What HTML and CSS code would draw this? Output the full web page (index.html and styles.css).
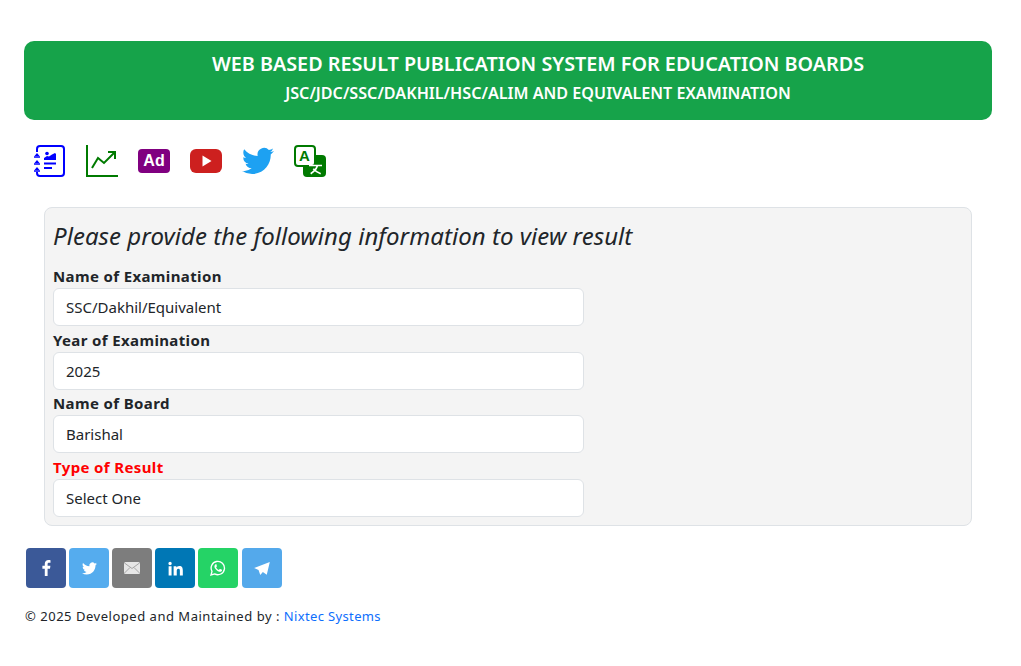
FILE: index.html
```html
<!DOCTYPE html>
<html lang="en">
<head>
    <meta charset="UTF-8">
    <meta name="viewport" content="width=device-width, initial-scale=1.0">
    <title>Web Based Result Publication System</title>
    <link rel="stylesheet" href="styles.css">
</head>
<body>
    <div class="page">
        <div class="banner">
            <h1>WEB BASED RESULT PUBLICATION SYSTEM FOR EDUCATION BOARDS</h1>
            <h2>JSC/JDC/SSC/DAKHIL/HSC/ALIM AND EQUIVALENT EXAMINATION</h2>
        </div>

        <div class="tools">
            <a href="#" class="tool">
                <svg width="32" height="32" viewBox="0 0 32 32">
                    <path d="M3 7V4a3 3 0 0 1 3-3h21a3 3 0 0 1 3 3v24a3 3 0 0 1-3 3H6a3 3 0 0 1-3-3v-1" fill="none" stroke="#00f" stroke-width="2"/>
                    <path d="M0 12h6M0 19h6M0 26h6" stroke="#00f" stroke-width="1.600"/>
                    <path d="M3 8l2.500 3h-5zM3 15l2.500 3h-5zM3 22l2.500 3h-5z" fill="#00f"/>
                    <circle cx="13" cy="8.500" r="1.800" fill="#00f"/>
                    <path d="M10 15v-2l3-2 2 .5 3-2 3-1.500 1 1v6z" fill="#00f"/>
                    <path d="M10 18.500h12M10 23h8" stroke="#00f" stroke-width="1.800"/>
                </svg>
            </a>
            <a href="#" class="tool">
                <svg width="32" height="32" viewBox="0 0 32 32" fill="none" stroke="#007a00" stroke-width="2">
                    <path d="M1 0v31h32"/>
                    <path d="M6 23l6-10 6 5 11-11"/>
                    <path d="M22 7h7v7"/>
                </svg>
            </a>
            <a href="#" class="tool">
                <span class="ad-badge">Ad</span>
            </a>
            <a href="#" class="tool">
                <svg width="32" height="32" viewBox="0 0 32 32">
                    <rect x="0" y="4" width="32" height="24" rx="6" fill="#cd201f"/>
                    <path d="M12.500 10.500l9 5.500-9 5.500z" fill="#fff"/>
                </svg>
            </a>
            <a href="#" class="tool">
                <svg width="32" height="32" viewBox="0 0 24 24">
                    <path fill="#1da1f2" d="M23.950 4.570a10 10 0 0 1-2.820.77 4.960 4.960 0 0 0 2.160-2.720c-.95.550-2 .95-3.130 1.180a4.920 4.920 0 0 0-8.380 4.480C7.690 8.100 4.070 6.130 1.640 3.160a4.820 4.820 0 0 0-.67 2.480c0 1.710.87 3.210 2.190 4.100a4.900 4.900 0 0 1-2.230-.62v.06a4.920 4.920 0 0 0 3.950 4.830 4.940 4.940 0 0 1-2.210.08 4.940 4.940 0 0 0 4.600 3.420A9.870 9.870 0 0 1 0 19.540a14 14 0 0 0 7.560 2.210c9.050 0 14-7.500 14-13.980 0-.21 0-.42-.02-.63a9.940 9.940 0 0 0 2.460-2.550z"/>
                </svg>
            </a>
            <a href="#" class="tool">
                <svg width="32" height="32" viewBox="0 0 32 32">
                    <rect x="9" y="10" width="23" height="22" rx="4" fill="#007a00"/>
                    <rect x="1" y="1" width="20" height="20" rx="3" fill="#fff" stroke="#007a00" stroke-width="2"/>
                    <text x="10.500" y="16" class="tr-a">A</text>
                    <path d="M15 20.500h13M23.300 21c-1 3-3.500 5.700-6.600 7.700M19.300 23.700c2 2.300 4.500 4 7.400 5" fill="none" stroke="#fff" stroke-width="1.700"/>
                </svg>
            </a>
        </div>

        <form class="result-form">
            <h3>Please provide the following information to view result</h3>
            <label for="exam">Name of Examination</label>
            <select id="exam"><option>SSC/Dakhil/Equivalent</option></select>
            <label for="year">Year of Examination</label>
            <select id="year"><option>2025</option></select>
            <label for="board">Name of Board</label>
            <select id="board"><option>Barishal</option></select>
            <label for="type" class="required">Type of Result</label>
            <select id="type"><option>Select One</option></select>
        </form>

        <div class="share">
            <a href="#" class="share-btn fb">
                <svg width="20" height="20" viewBox="0 0 20 20"><path fill="#fff" d="M11.600 18V10.700h2.400l.4-2.900h-2.800V6.100c0-.8.300-1.400 1.400-1.400h1.500V2.200C14.200 2.100 13.400 2 12.500 2 10.300 2 8.800 3.300 8.800 5.800v2H6.400v2.900h2.400V18z"/></svg>
            </a>
            <a href="#" class="share-btn tw">
                <svg width="15" height="15" viewBox="0 0 24 24"><path fill="#fff" d="M23.950 4.570a10 10 0 0 1-2.820.77 4.960 4.960 0 0 0 2.160-2.720c-.95.550-2 .95-3.130 1.180a4.920 4.920 0 0 0-8.380 4.480C7.690 8.100 4.070 6.130 1.640 3.160a4.820 4.820 0 0 0-.67 2.480c0 1.710.87 3.210 2.190 4.100a4.900 4.900 0 0 1-2.230-.62v.06a4.920 4.920 0 0 0 3.950 4.830 4.940 4.940 0 0 1-2.210.08 4.940 4.940 0 0 0 4.600 3.420A9.870 9.870 0 0 1 0 19.540a14 14 0 0 0 7.560 2.210c9.050 0 14-7.500 14-13.980 0-.21 0-.42-.02-.63a9.940 9.940 0 0 0 2.460-2.550z"/></svg>
            </a>
            <a href="#" class="share-btn mail">
                <svg width="16" height="12" viewBox="0 0 16 12"><rect width="16" height="12" rx="1.500" fill="#e6e6e6"/><path d="M0.500 1l7.500 5.500L15.500 1M0.500 11l5.500-5.500M15.500 11L10 5.500" fill="none" stroke="#8a8a8a" stroke-width=".7"/></svg>
            </a>
            <a href="#" class="share-btn li">
                <svg width="15" height="15" viewBox="0 0 24 24"><path fill="#fff" d="M1 8.500h4.700V23H1zM3.300 1.200a2.700 2.700 0 1 1 0 5.400 2.700 2.700 0 0 1 0-5.400zM9 8.500h4.400v2c.7-1.200 2.300-2.400 4.600-2.400 4.800 0 5.700 3.100 5.700 7.200V23H19v-6.800c0-1.600 0-3.700-2.300-3.700s-2.700 1.800-2.700 3.600V23H9z"/></svg>
            </a>
            <a href="#" class="share-btn wa">
                <svg width="16" height="16" viewBox="0 0 24 24"><path fill="none" stroke="#fff" stroke-width="2" d="M1.500 22.500l1.500-5.500a10 10 0 1 1 4 3.900z"/><path fill="#fff" d="M8.800 6.500c-.4 0-.9.200-1.200.6-.5.600-1 1.400-1 2.600 0 2.700 3.700 7.100 7.700 8 1.500.300 3.400-.5 3.700-2 .1-.4.100-.8 0-1l-2.700-1.300c-.3-.1-.5 0-.7.200l-1 1.200c-.2.200-.4.200-.6.100-1.600-.7-2.900-1.900-3.700-3.400-.1-.2 0-.4.100-.5l.7-.9c.2-.2.200-.4.100-.6L10 7c-.2-.4-.5-.5-1.200-.5z"/></svg>
            </a>
            <a href="#" class="share-btn tg">
                <svg width="16" height="13" viewBox="0 0 18 15"><path fill="#fff" d="M18 0L0 7l5 2.300L7 15l3-3.600 4.500 3.300z"/></svg>
            </a>
        </div>

        <p class="footer">© 2025 Developed and Maintained by : <a href="#">Nixtec Systems</a></p>
    </div>
</body>
</html>
```

FILE: styles.css
```css
body {
    margin: 0;
    background-color: #fff;
    font-family: "Noto Sans", "Open Sans", sans-serif;
    color: #212529;
}
a {
    text-decoration: none;
}
.page {
    padding: 41px 29px 0 24px;
}
.banner {
    background-color: #16a34a;
    border-radius: 10px;
    height: 79px;
    box-sizing: border-box;
    padding-top: 9px;
    padding-left: 60px;
    text-align: center;
    color: #fff;
}
.banner h1 {
    margin: 0;
    font-size: 19.770px;
    line-height: 28px;
    font-weight: 600;
}
.banner h2 {
    margin: 3px 0 0 0;
    font-size: 16.150px;
    line-height: 24px;
    font-weight: 600;
}
.tools {
    display: flex;
    gap: 20px;
    margin-top: 25px;
    padding-left: 10px;
    height: 32px;
}
.tool {
    display: block;
    width: 32px;
    height: 32px;
}
.tool svg {
    display: block;
}
.ad-badge {
    display: flex;
    align-items: center;
    justify-content: center;
    margin-top: 4px;
    width: 32px;
    height: 24px;
    border-radius: 4px;
    background-color: #800080;
    color: #fff;
    font-family: "Liberation Sans", sans-serif;
    font-size: 16px;
    font-weight: 700;
}
.tr-a {
    font-family: "Liberation Sans", sans-serif;
    font-size: 15px;
    font-weight: 700;
    fill: #007a00;
    text-anchor: middle;
}
.result-form {
    margin: 30px 20px 0 20px;
    padding: 8px;
    height: 319px;
    box-sizing: border-box;
    background-color: #f4f4f4;
    border: 1px solid #dee2e6;
    border-radius: 8px;
}
.result-form h3 {
    margin: 0 0 10px 0;
    font-size: 24px;
    line-height: 40px;
    font-weight: 400;
    font-style: italic;
    letter-spacing: .05px;
}
.result-form label {
    display: block;
    margin-bottom: 1px;
    font-size: 15px;
    line-height: 21px;
    font-weight: 700;
    letter-spacing: .37px;
}
.result-form label.required {
    color: #f00;
}
.result-form select {
    display: block;
    appearance: none;
    width: 531px;
    height: 38px;
    padding: 0 12px;
    margin-bottom: 3.500px;
    background-color: #fff;
    border: 1px solid #dee2e6;
    border-radius: 6px;
    font-family: inherit;
    font-size: 15px;
    color: #212529;
}
.share {
    display: flex;
    gap: 3px;
    margin-top: 22px;
    padding-left: 2px;
}
.share-btn {
    display: flex;
    align-items: center;
    justify-content: center;
    width: 40px;
    height: 40px;
    border-radius: 4px;
}
.share-btn.wa {
    margin-right: 1px;
}
.fb { background-color: #3b5998; }
.tw { background-color: #55acee; }
.mail { background-color: #7d7d7d; }
.li { background-color: #0077b5; }
.wa { background-color: #25d366; }
.tg { background-color: #54a9eb; }
.footer {
    margin: 18px 0 0 1px;
    font-size: 13px;
    line-height: 20px;
    letter-spacing: .52px;
}
.footer a {
    color: #0d6efd;
    letter-spacing: .35px;
}
```
